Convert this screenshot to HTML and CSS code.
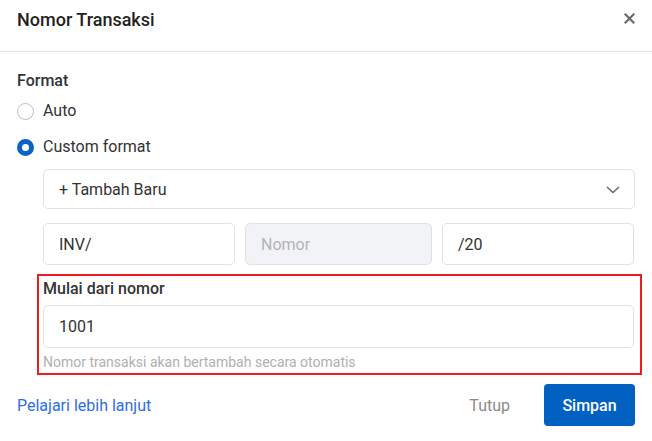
FILE: index.html
```html
<!DOCTYPE html>
<html lang="id">
<head>
<meta charset="utf-8">
<title>Nomor Transaksi</title>
<link rel="stylesheet" href="styles.css">
</head>
<body>
<div class="modal">
  <div class="header">
    <div class="title">Nomor Transaksi</div>
    <button class="close" aria-label="Tutup">
      <svg width="11" height="11" viewBox="0 0 11 11"><path d="M1.5 1.5 L9.5 9.5 M9.5 1.5 L1.5 9.5" stroke="#6b6b6b" stroke-width="2.2" stroke-linecap="square"/></svg>
    </button>
  </div>
  <div class="body">
    <div class="section-label">Format</div>
    <label class="radio-row">
      <span class="radio"></span>
      <span class="radio-text">Auto</span>
    </label>
    <label class="radio-row">
      <span class="radio checked"></span>
      <span class="radio-text">Custom format</span>
    </label>
    <div class="options">
      <div class="select">
        <span>+ Tambah Baru</span>
        <svg class="chev" width="14" height="8" viewBox="0 0 14 8"><path d="M1 1 L7 6.5 L13 1" fill="none" stroke="#6b6b6b" stroke-width="1.6"/></svg>
      </div>
      <div class="parts">
        <div class="input">INV/</div>
        <div class="input disabled">Nomor</div>
        <div class="input">/20</div>
      </div>
    </div>
    <div class="highlight">
      <div class="field-label">Mulai dari nomor</div>
      <div class="input wide">1001</div>
      <div class="help">Nomor transaksi akan bertambah secara otomatis</div>
    </div>
  </div>
  <div class="footer">
    <a class="link" href="#">Pelajari lebih lanjut</a>
    <div class="actions">
      <button class="btn-ghost">Tutup</button>
      <button class="btn-primary">Simpan</button>
    </div>
  </div>
</div>
</body>
</html>
```

FILE: styles.css
```css
* { box-sizing: border-box; }
html, body { margin: 0; padding: 0; background: #fff; }
body {
  font-family: Roboto, "Liberation Sans", Arial, sans-serif;
  color: #333;
  width: 652px;
  height: 441px;
  overflow: hidden;
}
.modal { width: 652px; }
.header {
  height: 52px;
  border-bottom: 1px solid #e2e2e2;
  display: flex;
  justify-content: space-between;
  align-items: flex-start;
  padding: 9px 17px 0 17px;
}
.title {
  font-size: 18px;
  line-height: 22px;
  font-weight: 500;
  color: #222;
}
.close {
  border: 0;
  background: transparent;
  padding: 0;
  margin-top: 4px;
  width: 11px;
  height: 11px;
  display: flex;
}
.body {
  padding: 19px 17px 0 17px;
}
.section-label {
  font-size: 16px;
  line-height: 20px;
  font-weight: 500;
  color: #333;
}
.radio-row {
  display: flex;
  align-items: center;
  gap: 9px;
  height: 36px;
  margin-top: 2px;
}
.radio-row + .radio-row { margin-top: 0; }
.radio {
  width: 17px;
  height: 17px;
  border-radius: 50%;
  border: 1px solid #b9bcc2;
  background: #fff;
  flex: none;
}
.radio.checked {
  border: 5px solid #0a62c4;
  background: #fff;
}
.radio-text {
  font-size: 16px;
  line-height: 20px;
  color: #333;
}
.options {
  margin-left: 26px;
  margin-top: 4px;
}
.select {
  height: 40px;
  border: 1px solid #e1e1e1;
  border-radius: 5px;
  display: flex;
  align-items: center;
  justify-content: space-between;
  padding: 0 14px 0 15px;
  font-size: 16px;
  color: #333;
}
.chev { display: block; margin-top: 1px; }
.parts {
  display: grid;
  grid-template-columns: 192px 187px 192px;
  column-gap: 10px;
  margin-top: 14px;
}
.input {
  height: 42px;
  border: 1px solid #e1e1e1;
  border-radius: 5px;
  display: flex;
  align-items: center;
  padding: 0 15px;
  font-size: 16px;
  color: #333;
  background: #fff;
}
.input.disabled {
  background: #f2f3f6;
  color: #b3b3b3;
}
.highlight {
  margin: 9px -7px 0 20px;
  border: 2px solid #ec1c24;
  padding: 3px 6px 3px 4px;
}
.field-label {
  font-size: 16px;
  line-height: 20px;
  font-weight: 500;
  color: #333;
}
.input.wide {
  margin-top: 6px;
  height: 43px;
}
.help {
  margin-top: 6px;
  font-size: 14px;
  line-height: 16px;
  color: #b0b0b0;
}
.footer {
  display: flex;
  justify-content: space-between;
  align-items: center;
  padding: 9px 17px 0 17px;
}
.link {
  font-size: 16px;
  color: #2d6ee6;
  text-decoration: none;
}
.actions {
  display: flex;
  align-items: center;
}
.btn-ghost {
  border: 0;
  background: transparent;
  font-family: inherit;
  font-size: 16px;
  color: #8a8a8a;
  padding: 0 16px;
  margin-right: 18px;
  height: 42px;
}
.btn-primary {
  border: 0;
  background: #0061c1;
  color: #fff;
  font-family: inherit;
  font-size: 16px;
  font-weight: 500;
  width: 91px;
  height: 42px;
  border-radius: 4px;
}
```
